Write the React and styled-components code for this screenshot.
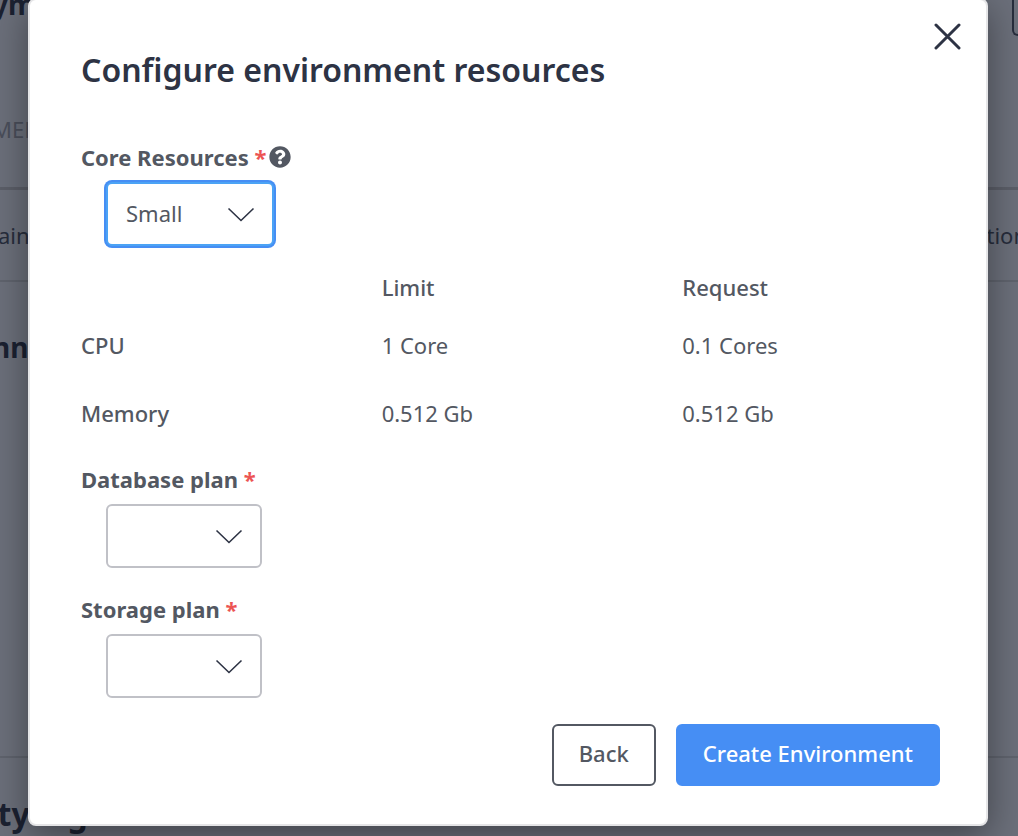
import React from "react";
import styled, { createGlobalStyle } from "styled-components";

const GlobalStyle = createGlobalStyle`
  *, *::before, *::after { box-sizing: border-box; }
  html, body { margin: 0; }
  body {
    background: #6b6f7a;
    color: #535862;
    font-family: "Noto Sans", sans-serif;
    font-size: 22px;
    line-height: 30px;
    overflow: hidden;
  }
  button, select { font: inherit; color: inherit; }
`;

const Shell = styled.div`
  position: relative;
  min-height: 100vh;
  overflow: hidden;
`;

const Backdrop = styled.div`
  color: #1b2131;
  height: 100vh;
  overflow: hidden;
`;

const BackdropBar = styled.div`
  display: flex;
  justify-content: space-between;
  height: 113px;
`;

const BackdropTitle = styled.h2`
  margin: 0 0 0 ${(p) => (p.$size ? -12 : -8)}px;
  padding-top: ${(p) => p.$top || 0}px;
  font-size: ${(p) => p.$size || 28}px;
  line-height: 40px;
  font-weight: 700;
`;

const BarTitle = styled(BackdropTitle)`
  margin-top: -16px;
`;

const BackdropAction = styled.span`
  width: 6px;
  height: 36px;
  border: 2px solid #272d3c;
  border-width: 0 0 2px 2px;
  border-radius: 0 0 0 6px;
`;

const BackdropTabs = styled.div`
  height: 77px;
  margin-left: -8px;
  padding-top: 1px;
  border-bottom: 3px solid #5b5e68;
  color: #4a4e5a;
`;

const BackdropRow = styled.div`
  display: flex;
  justify-content: space-between;
  align-items: center;
  height: 92px;
  margin: 0 -9px 0 -2px;
  border-bottom: 2px solid #5f636d;
  color: #272d3c;
`;

const BackdropBody = styled.div`
  height: 476px;
  border-bottom: 2px solid #5f636d;
`;

const Overlay = styled.div`
  position: absolute;
  inset: 0;
  padding: 0 30px 0 28px;
`;

const Modal = styled.section`
  margin-top: -2px;
  padding: 48px 46px 38px 51px;
  background: #fff;
  border: 2px solid #e5e5e7;
  border-radius: 8px;
  box-shadow: 0 10px 36px rgba(0, 0, 0, 0.4);
`;

const CloseButton = styled.button`
  position: absolute;
  top: 20px;
  right: 54px;
  display: grid;
  place-items: center;
  width: 32px;
  height: 32px;
  padding: 0;
  border: 0;
  background: none;
  color: #2d3344;
  cursor: pointer;
`;

const Title = styled.h1`
  margin: 0 0 50px;
  color: #2d3344;
  font-size: 32px;
  line-height: 44px;
  font-weight: 600;
`;

const Field = styled.div`
  margin-top: ${(p) => p.$gap || 0}px;
`;

const LabelRow = styled.div`
  display: flex;
  align-items: center;
  gap: 3px;
  margin-bottom: 10px;
`;

const Label = styled.label`
  font-weight: 700;
`;

const Required = styled.span`
  color: #ec5453;
`;

const HelpButton = styled.button`
  display: flex;
  padding: 0;
  border: 0;
  background: none;
  cursor: help;
`;

const SelectWrap = styled.div`
  position: relative;
  width: ${(p) => (p.$wide ? 168 : 156)}px;
  margin-left: 25px;
`;

const Select = styled.select`
  appearance: none;
  display: block;
  width: 100%;
  height: 64px;
  padding: 0 56px 2px 18px;
  border: 2px solid ${(p) => (p.$active ? "#4ba3f5" : "#c0c1c7")};
  border-radius: 6px;
  outline: none;
  background: #fff;
  box-shadow: ${(p) => (p.$active ? "0 0 0 2px #468ef4" : "none")};
`;

const Chevron = styled.svg`
  position: absolute;
  top: 24px;
  right: 18px;
  pointer-events: none;
`;

const Resources = styled.table`
  width: 100%;
  margin-top: 17px;
  border-collapse: collapse;
  table-layout: fixed;
  text-align: left;
`;

const Cell = styled.td`
  height: 68px;
  padding: 0;
`;

const RowHead = styled.th`
  height: 68px;
  padding: 0;
  font-weight: 500;
`;

const ColumnHead = styled.th`
  width: ${(p) => p.$width};
  height: 48px;
  padding: 0;
  font-weight: 500;
`;

const Actions = styled.div`
  display: flex;
  justify-content: flex-end;
  gap: 20px;
  margin-top: 26px;
`;

const Button = styled.button`
  height: 62px;
  padding: 0 25px 4px;
  border: 2px solid ${(p) => (p.$primary ? "#468ef4" : "#535862")};
  border-radius: 6px;
  background: ${(p) => (p.$primary ? "#468ef4" : "#fff")};
  color: ${(p) => (p.$primary ? "#fff" : "#535862")};
  font-weight: 500;
  cursor: pointer;
`;

function PlanSelect({ id, label, gap, active, options, help }) {
  return (
    <Field $gap={gap}>
      <LabelRow>
        <Label htmlFor={id}>
          {label} <Required>*</Required>
        </Label>
        {help && (
          <HelpButton type="button" aria-label="Help">
            <svg width="22" height="22" viewBox="0 0 512 512" fill="currentColor">
              <path d="M504 256c0 137-111 248-248 248S8 393 8 256 119 8 256 8s248 111 248 248zM262.700 90c-54.500 0-89.300 23-116.500 63.800-3.500 5.300-2.400 12.400 2.700 16.300l34.700 26.300c5.200 3.900 12.600 3 16.700-2.100 17.900-22.700 30.100-35.800 57.300-35.800 20.400 0 45.700 13.100 45.700 33 0 15-12.400 22.700-32.500 34C247.100 238.500 216 255 216 296v4c0 6.600 5.400 12 12 12h56c6.600 0 12-5.400 12-12v-1.300c0-28.500 83.200-29.600 83.200-106.700 0-58-60.200-102-116.500-102zM256 338c-25.400 0-46 20.600-46 46s20.600 46 46 46 46-20.600 46-46-20.600-46-46-46z" />
            </svg>
          </HelpButton>
        )}
      </LabelRow>
      <SelectWrap $wide={active}>
        <Select id={id} $active={active}>
          {options.map((option) => (
            <option key={option}>{option}</option>
          ))}
        </Select>
        <Chevron width="30" height="18" viewBox="0 0 30 18" fill="none" stroke="#2d3344" strokeWidth="1.6">
          <path d="M2.500 2.500L15 14.500L27.500 2.500" />
        </Chevron>
      </SelectWrap>
    </Field>
  );
}

export default function App() {
  return (
    <Shell>
      <GlobalStyle />
      <Backdrop aria-hidden="true">
        <BackdropBar>
          <BarTitle>ym</BarTitle>
          <BackdropAction />
        </BackdropBar>
        <BackdropTabs>MEN</BackdropTabs>
        <BackdropRow>
          <span>ain</span>
          <span>tion</span>
        </BackdropRow>
        <BackdropBody>
          <BackdropTitle $top={45}>nn</BackdropTitle>
        </BackdropBody>
        <BackdropTitle $top={36} $size={32}>ity log</BackdropTitle>
      </Backdrop>
      <Overlay>
        <Modal role="dialog" aria-modal="true" aria-labelledby="modal-title">
          <CloseButton type="button" aria-label="Close">
            <svg width="28" height="28" viewBox="0 0 28 28" fill="none" stroke="currentColor" strokeWidth="3" strokeLinecap="round">
              <path d="M2 3L25 26M25 3L2 26" />
            </svg>
          </CloseButton>
          <Title id="modal-title">Configure environment resources</Title>
          <PlanSelect id="core" label="Core Resources" active help options={["Small", "Medium", "Large"]} />
          <Resources>
            <thead>
              <tr>
                <ColumnHead as="td" $width="35%" />
                <ColumnHead scope="col" $width="35%">Limit</ColumnHead>
                <ColumnHead scope="col" $width="30%">Request</ColumnHead>
              </tr>
            </thead>
            <tbody>
              <tr>
                <RowHead scope="row">CPU</RowHead>
                <Cell>1 Core</Cell>
                <Cell>0.1 Cores</Cell>
              </tr>
              <tr>
                <RowHead scope="row">Memory</RowHead>
                <Cell>0.512 Gb</Cell>
                <Cell>0.512 Gb</Cell>
              </tr>
            </tbody>
          </Resources>
          <PlanSelect id="database" label="Database plan" gap={17} options={[""]} />
          <PlanSelect id="storage" label="Storage plan" gap={26} options={[""]} />
          <Actions>
            <Button type="button">Back</Button>
            <Button type="button" $primary>Create Environment</Button>
          </Actions>
        </Modal>
      </Overlay>
    </Shell>
  );
}
